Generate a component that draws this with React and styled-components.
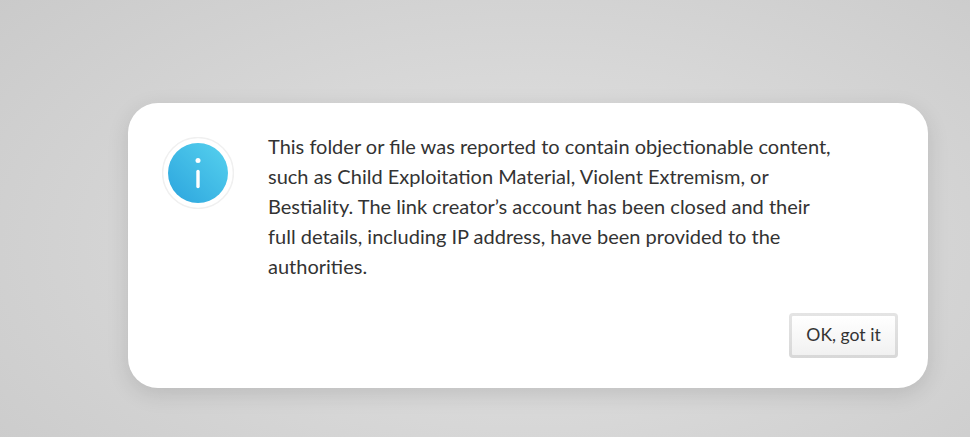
import React from "react";
import styled, { createGlobalStyle } from "styled-components";

const GlobalStyle = createGlobalStyle`
  html, body { margin: 0; padding: 0; }
`;

const Backdrop = styled.div`
  box-sizing: border-box;
  width: 970px;
  height: 437px;
  overflow: hidden;
  padding: 103px 42px 0 128px;
  background: radial-gradient(ellipse 780px 430px at 528px 245px, #e3e3e3 0%, #c7c7c7 100%);
  font-family: Lato, sans-serif;
  color: #333;
`;

const Dialog = styled.section`
  box-sizing: border-box;
  display: flex;
  flex-direction: column;
  width: 800px;
  height: 285px;
  padding: 29px 30px 30px 34px;
  border-radius: 30px;
  background: #fff;
  box-shadow: 0 6px 22px rgba(0, 0, 0, 0.12);
`;

const Content = styled.div`
  display: flex;
  gap: 34px;
`;

const InfoIcon = styled.svg`
  flex: none;
  width: 72px;
  height: 72px;
  margin-top: 5px;
`;

const Message = styled.p`
  margin: -1px 0 0;
  width: 570px;
  font-size: 20px;
  line-height: 30px;
`;

const Actions = styled.footer`
  display: flex;
  justify-content: flex-end;
  margin-top: auto;
`;

const Button = styled.button`
  box-sizing: border-box;
  width: 109px;
  height: 45px;
  padding: 0 0 1px;
  border: 3px solid transparent;
  border-radius: 4px;
  background:
    linear-gradient(#fff, #f1f1f1) padding-box,
    linear-gradient(#e4e4e4, #d8d8d8) border-box;
  color: inherit;
  font: 17.6px/24px Lato, sans-serif;
`;

export default function App() {
  return (
    <Backdrop>
      <GlobalStyle />
      <Dialog role="dialog">
        <Content>
          <InfoIcon viewBox="0 0 72 72" aria-hidden="true">
            <defs>
              <linearGradient id="info" x1="0.15" y1="0.85" x2="0.85" y2="0.15">
                <stop offset="0" stopColor="#32abe0" />
                <stop offset="1" stopColor="#50cbec" />
              </linearGradient>
            </defs>
            <circle cx="36" cy="36" r="35.4" fill="#fff" stroke="#f0f0f0" strokeWidth="1.5" />
            <circle cx="36" cy="36" r="30" fill="url(#info)" />
            <circle cx="36" cy="23.5" r="2.5" fill="#fff" />
            <path d="M36 34.5V49.5" stroke="#fff" strokeWidth="3.4" strokeLinecap="round" />
          </InfoIcon>
          <Message>
            This folder or file was reported to contain objectionable content,
            such as Child Exploitation Material, Violent Extremism, or
            Bestiality. The link creator’s account has been closed and their
            full details, including IP address, have been provided to the
            authorities.
          </Message>
        </Content>
        <Actions>
          <Button type="button">OK, got it</Button>
        </Actions>
      </Dialog>
    </Backdrop>
  );
}
